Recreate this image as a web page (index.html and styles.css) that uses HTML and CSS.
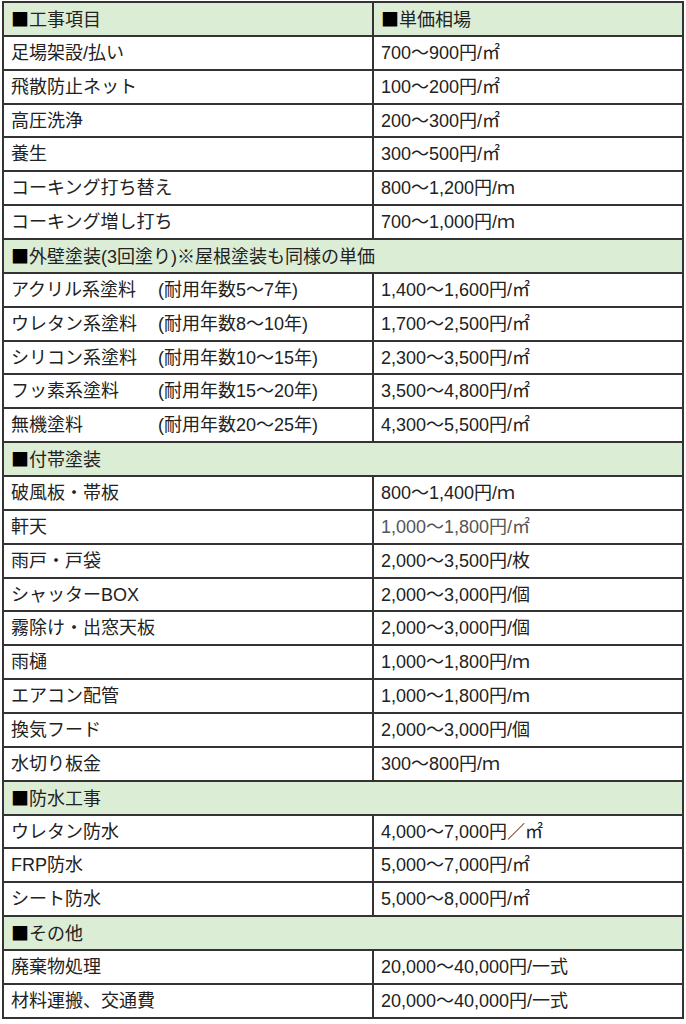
FILE: index.html
```html
<!DOCTYPE html>
<html lang="ja">
<head>
<meta charset="utf-8">
<link rel="stylesheet" href="styles.css">
</head>
<body>
<table class="price">
  <tr class="sec"><td><span class="sq">■</span>工事項目</td><td><span class="sq">■</span>単価相場</td></tr>
  <tr><td>足場架設/払い</td><td>700〜900円/㎡</td></tr>
  <tr><td>飛散防止ネット</td><td>100〜200円/㎡</td></tr>
  <tr><td>高圧洗浄</td><td>200〜300円/㎡</td></tr>
  <tr><td>養生</td><td>300〜500円/㎡</td></tr>
  <tr><td>コーキング打ち替え</td><td>800〜1,200円/ｍ</td></tr>
  <tr><td>コーキング増し打ち</td><td>700〜1,000円/ｍ</td></tr>
  <tr class="sec"><td colspan="2"><span class="sq">■</span>外壁塗装(3回塗り)※屋根塗装も同様の単価</td></tr>
  <tr><td><span class="name">アクリル系塗料</span>(耐用年数5〜7年)</td><td>1,400〜1,600円/㎡</td></tr>
  <tr><td><span class="name">ウレタン系塗料</span>(耐用年数8〜10年)</td><td>1,700〜2,500円/㎡</td></tr>
  <tr><td><span class="name">シリコン系塗料</span>(耐用年数10〜15年)</td><td>2,300〜3,500円/㎡</td></tr>
  <tr><td><span class="name">フッ素系塗料</span>(耐用年数15〜20年)</td><td>3,500〜4,800円/㎡</td></tr>
  <tr><td><span class="name">無機塗料</span>(耐用年数20〜25年)</td><td>4,300〜5,500円/㎡</td></tr>
  <tr class="sec"><td colspan="2"><span class="sq">■</span>付帯塗装</td></tr>
  <tr><td>破風板・帯板</td><td>800〜1,400円/ｍ</td></tr>
  <tr><td>軒天</td><td class="light">1,000〜1,800円/㎡</td></tr>
  <tr><td>雨戸・戸袋</td><td>2,000〜3,500円/枚</td></tr>
  <tr><td>シャッターBOX</td><td>2,000〜3,000円/個</td></tr>
  <tr><td>霧除け・出窓天板</td><td>2,000〜3,000円/個</td></tr>
  <tr><td>雨樋</td><td>1,000〜1,800円/ｍ</td></tr>
  <tr><td>エアコン配管</td><td>1,000〜1,800円/ｍ</td></tr>
  <tr><td>換気フード</td><td>2,000〜3,000円/個</td></tr>
  <tr><td>水切り板金</td><td>300〜800円/ｍ</td></tr>
  <tr class="sec"><td colspan="2"><span class="sq">■</span>防水工事</td></tr>
  <tr><td>ウレタン防水</td><td>4,000〜7,000円／㎡</td></tr>
  <tr><td>FRP防水</td><td>5,000〜7,000円/㎡</td></tr>
  <tr><td>シート防水</td><td>5,000〜8,000円/㎡</td></tr>
  <tr class="sec"><td colspan="2"><span class="sq">■</span>その他</td></tr>
  <tr><td>廃棄物処理</td><td>20,000〜40,000円/一式</td></tr>
  <tr><td>材料運搬、交通費</td><td>20,000〜40,000円/一式</td></tr>
</table>
</body>
</html>
```
FILE: styles.css
```css
html, body {
  margin: 0;
  padding: 0;
  background: #ffffff;
}

body {
  padding: 1px 0 0 2px;
}

.price {
  border-collapse: collapse;
  width: 682px;
  table-layout: fixed;
  font-family: "Liberation Sans", "Noto Sans CJK JP", sans-serif;
  font-size: 18px;
  color: #222222;
}

.price td {
  border: 2px solid #333333;
  height: 33.87px;
  padding: 0 0 0 7px;
  box-sizing: border-box;
  white-space: nowrap;
  line-height: 20px;
  vertical-align: middle;
}

.price td:first-child {
  width: 370px;
}

.price tr.sec td {
  background: #dcedd6;
}

.sq {
  font-family: "Noto Sans CJK JP", sans-serif;
  color: #000000;
}

.name {
  display: inline-block;
  width: 147px;
}

.light {
  color: #555555;
}
```
